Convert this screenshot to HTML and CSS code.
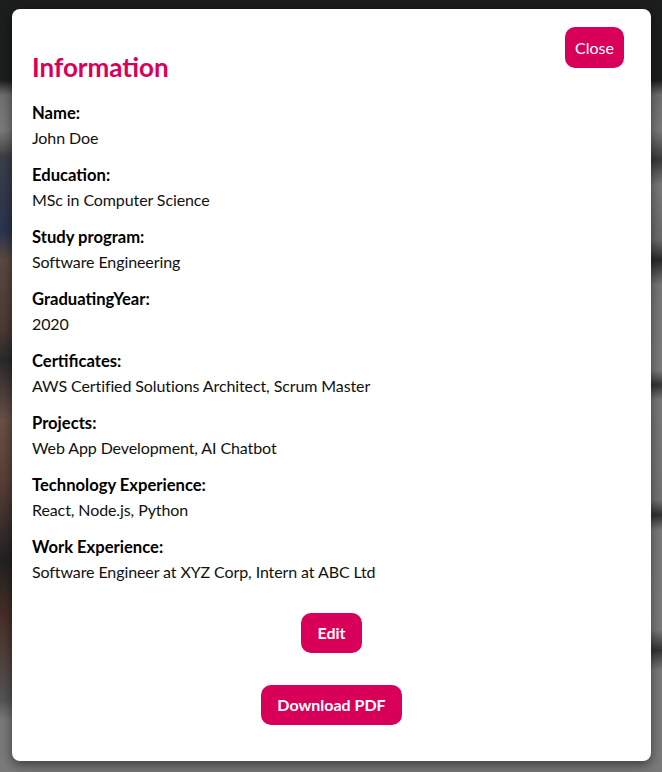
FILE: index.html
```html
<!DOCTYPE html>
<html lang="en">
<head>
<meta charset="utf-8">
<title>Information</title>
<link rel="stylesheet" href="styles.css">
</head>
<body>
<div class="backdrop">
  <div class="modal">
    <button class="btn close-btn">Close</button>
    <h2 class="title">Information</h2>
    <div class="fields">
      <div class="field"><div class="label">Name:</div><div class="value">John Doe</div></div>
      <div class="field"><div class="label">Education:</div><div class="value">MSc in Computer Science</div></div>
      <div class="field"><div class="label">Study program:</div><div class="value">Software Engineering</div></div>
      <div class="field"><div class="label">GraduatingYear:</div><div class="value">2020</div></div>
      <div class="field"><div class="label">Certificates:</div><div class="value">AWS Certified Solutions Architect, Scrum Master</div></div>
      <div class="field"><div class="label">Projects:</div><div class="value">Web App Development, AI Chatbot</div></div>
      <div class="field"><div class="label">Technology Experience:</div><div class="value">React, Node.js, Python</div></div>
      <div class="field"><div class="label">Work Experience:</div><div class="value">Software Engineer at XYZ Corp, Intern at ABC Ltd</div></div>
    </div>
    <div class="actions">
      <button class="btn btn-bold">Edit</button>
      <button class="btn btn-bold">Download PDF</button>
    </div>
  </div>
</div>
</body>
</html>
```
FILE: styles.css
```css
html, body {
  margin: 0;
  padding: 0;
}
body {
  width: 662px;
  height: 772px;
  overflow: hidden;
  font-family: Lato, "Liberation Sans", sans-serif;
  background:
    linear-gradient(180deg, #1c1d1d 0, #1c1d1d 80px, #6f6f6f 95px, #7b7b7b 130px, #3a3a3a 160px, #7a7a7a 185px, #6a6a6a 240px, #2a2a2a 260px, #777 285px, #7c7c7c 370px, #353535 385px, #797979 400px, #737373 500px, #303030 515px, #7a7a7a 530px, #7b7b7b 630px, #333 650px, #7a7a7a 670px, #7a7a7a 100%);
}
.backdrop {
  padding: 9px 11px 0 12px;
  background:
    linear-gradient(180deg, transparent 0, transparent 150px, #3b3f4a 160px, #2a3450 230px, #5a4a40 260px, #4a3a34 330px, #2a2a2a 360px, #6a5048 420px, #5a4038 480px, #222 560px, #4a3028 620px, #555 700px, transparent 720px) left top / 12px 100% no-repeat;
}
.modal {
  position: relative;
  box-sizing: border-box;
  width: 639px;
  background: #fff;
  border-radius: 8px;
  padding: 20px 20px 36px 20px;
  box-shadow: 0 4px 12px rgba(0, 0, 0, 0.5);
}
.title {
  margin: 22px 0 18px;
  font-size: 26px;
  line-height: 32px;
  font-weight: 700;
  color: #d9005a;
}
.fields {
  display: flex;
  flex-direction: column;
  gap: 13px;
}
.label {
  font-weight: 700;
  font-size: 16.6px;
  line-height: 24px;
  color: #000;
  margin-bottom: 1px;
}
.value {
  font-size: 16px;
  line-height: 24px;
  color: #111;
  letter-spacing: -0.1px;
}
.btn {
  font-family: inherit;
  font-size: 16px;
  line-height: 24px;
  color: #fff;
  background: #d9005a;
  border: none;
  border-radius: 10px;
  padding: 8px 16px;
  cursor: pointer;
}
.close-btn {
  position: absolute;
  top: 18px;
  right: 27px;
  padding: 8.5px 10px;
}
.btn-bold {
  font-weight: 700;
}
.actions {
  margin-top: 29px;
  display: flex;
  flex-direction: column;
  align-items: center;
  gap: 32px;
}
```
